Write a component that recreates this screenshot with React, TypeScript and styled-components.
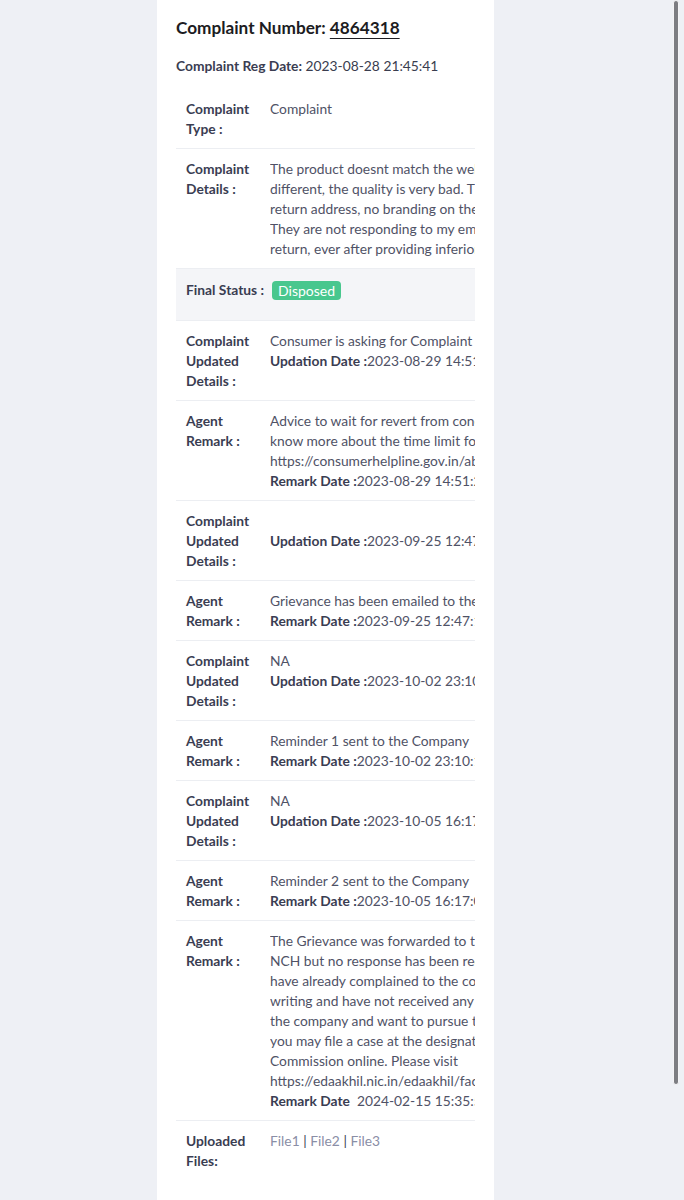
import React from "react";
import styled, { createGlobalStyle } from "styled-components";

const Global = createGlobalStyle`
  html, body {
    margin: 0;
    padding: 0;
    height: 1200px;
    overflow: hidden;
    background: #eef0f5;
    font-family: Lato, "Open Sans", "Liberation Sans", sans-serif;
  }
  * { box-sizing: border-box; }
`;

const Page = styled.div`
  display: flex;
  height: 1200px;
  padding-left: 157px;
`;

const Card = styled.main`
  width: 337px;
  min-height: 1200px;
  background: #ffffff;
  padding: 16px 19px 0 19px;
  display: flex;
  flex-direction: column;
`;

const Heading = styled.h1`
  margin: 0;
  font-size: 17.2px;
  line-height: 24px;
  font-weight: 700;
  color: #1c1c22;
`;

const Num = styled.span`
  text-decoration: underline;
  text-decoration-thickness: 1px;
  text-underline-offset: 4px;
`;

const RegLine = styled.p`
  margin: 16px 0 0 0;
  font-size: 13.8px;
  line-height: 20px;
  color: #3a3d4f;
  & > b { font-weight: 700; color: #3a3d52; }
`;

const Table = styled.div`
  margin-top: 13px;
  width: 299px;
  overflow: hidden;
  display: flex;
  flex-direction: column;
`;

const Row = styled.div`
  display: grid;
  grid-template-columns: 94px 1fr;
  padding: 10px 0 9px 0;
  border-bottom: 1px solid #eceef2;
  font-size: 13.8px;
  line-height: 20px;
`;

const Label = styled.div`
  padding: 0 10px 0 10px;
  font-weight: 700;
  color: #3a3d52;
`;

const Value = styled.div`
  color: #4f5266;
  white-space: nowrap;
  overflow: hidden;
  min-width: 0;
`;

const Line = styled.div`
  min-height: 20px;
  & > b { font-weight: 700; color: #3a3d52; }
`;

const StatusRow = styled.div`
  display: flex;
  align-items: flex-start;
  gap: 8px;
  background: #f4f5f8;
  padding: 11px 10px 20px 10px;
  font-size: 13.8px;
  line-height: 20px;
  height: 52px;
  border-bottom: 1px solid #eceef2;
`;

const StatusLabel = styled.span`
  font-weight: 700;
  color: #3a3d52;
`;

const Badge = styled.span`
  display: inline-block;
  background: #48c78e;
  color: #ffffff;
  border-radius: 4px;
  padding: 0 6px;
  font-size: 14px;
  line-height: 19px;
  margin-top: 1px;
`;

const FileLink = styled.span`
  color: #8a8ea6;
`;

const Sep = styled.span`
  color: #3a3d52;
`;

const FilesRow = styled(Row)`
  border-bottom: none;
`;

const Thumb = styled.div`
  position: fixed;
  top: 0;
  right: 5px;
  width: 6px;
  height: 1085px;
  background: #7c7d82;
  border: 1px solid #f4f4f6;
  border-radius: 3px;
`;

type Entry = { label: string; lines: React.ReactNode[] };

const rowsA: Entry[] = [
  { label: "Complaint Type :", lines: ["Complaint"] },
  {
    label: "Complaint Details :",
    lines: [
      "The product doesnt match the website description, the product is",
      "different, the quality is very bad. The package came with no",
      "return address, no branding on the box or on the product.",
      "They are not responding to my emails for the refund and",
      "return, ever after providing inferior product. I want a refund.",
    ],
  },
];

const rowsB: Entry[] = [
  {
    label: "Complaint Updated Details :",
    lines: [
      "Consumer is asking for Complaint status",
      <><b>Updation Date :</b>2023-08-29 14:51:20</>,
    ],
  },
  {
    label: "Agent Remark :",
    lines: [
      "Advice to wait for revert from concerned company. To",
      "know more about the time limit for resolution, visit",
      "https://consumerhelpline.gov.in/about-us.php",
      <><b>Remark Date :</b>2023-08-29 14:51:20</>,
    ],
  },
  {
    label: "Complaint Updated Details :",
    lines: ["", <><b>Updation Date :</b>2023-09-25 12:47:11</>],
  },
  {
    label: "Agent Remark :",
    lines: [
      "Grievance has been emailed to the Company",
      <><b>Remark Date :</b>2023-09-25 12:47:11</>,
    ],
  },
  {
    label: "Complaint Updated Details :",
    lines: ["NA", <><b>Updation Date :</b>2023-10-02 23:10:15</>],
  },
  {
    label: "Agent Remark :",
    lines: [
      "Reminder 1 sent to the Company",
      <><b>Remark Date :</b>2023-10-02 23:10:15</>,
    ],
  },
  {
    label: "Complaint Updated Details :",
    lines: ["NA", <><b>Updation Date :</b>2023-10-05 16:17:02</>],
  },
  {
    label: "Agent Remark :",
    lines: [
      "Reminder 2 sent to the Company",
      <><b>Remark Date :</b>2023-10-05 16:17:02</>,
    ],
  },
  {
    label: "Agent Remark :",
    lines: [
      "The Grievance was forwarded to the company through",
      "NCH but no response has been received. In case you",
      "have already complained to the company in",
      "writing and have not received any response from",
      "the company and want to pursue the matter further,",
      "you may file a case at the designated Consumer",
      "Commission online. Please visit",
      "https://edaakhil.nic.in/edaakhil/faces/index.xhtml",
      <><b>Remark Date</b>&nbsp; 2024-02-15 15:35:52</>,
    ],
  },
];

const DataRow: React.FC<{ entry: Entry }> = ({ entry }) => (
  <Row>
    <Label>{entry.label}</Label>
    <Value>
      {entry.lines.map((l, i) => (
        <Line key={i}>{l}</Line>
      ))}
    </Value>
  </Row>
);

export default function App() {
  return (
    <>
      <Global />
      <Page>
        <Card>
          <Heading>
            Complaint Number: <Num>4864318</Num>
          </Heading>
          <RegLine>
            <b>Complaint Reg Date:</b> 2023-08-28 21:45:41
          </RegLine>
          <Table>
            {rowsA.map((e, i) => (
              <DataRow key={"a" + i} entry={e} />
            ))}
            <StatusRow>
              <StatusLabel>Final Status :</StatusLabel>
              <Badge>Disposed</Badge>
            </StatusRow>
            {rowsB.map((e, i) => (
              <DataRow key={"b" + i} entry={e} />
            ))}
            <FilesRow>
              <Label>Uploaded Files:</Label>
              <Value>
                <Line>
                  <FileLink>File1</FileLink> <Sep>|</Sep> <FileLink>File2</FileLink>{" "}
                  <Sep>|</Sep> <FileLink>File3</FileLink>
                </Line>
              </Value>
            </FilesRow>
          </Table>
        </Card>
      </Page>
      <Thumb />
    </>
  );
}
